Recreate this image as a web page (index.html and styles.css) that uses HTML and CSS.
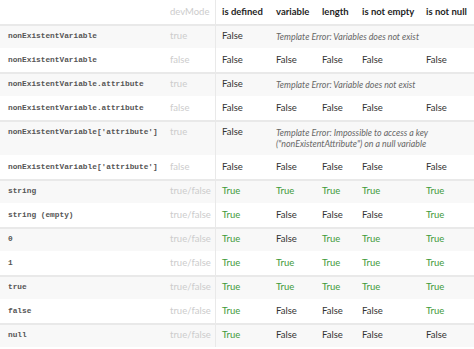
FILE: index.html
```html
<!DOCTYPE html>
<html>
<head>
<meta charset="utf-8">
<link rel="stylesheet" href="styles.css">
</head>
<body>
<div class="table">
  <div class="row head">
    <div class="c label"></div>
    <div class="c mode">devMode</div>
    <div class="c def">is defined</div>
    <div class="c">variable</div>
    <div class="c">length</div>
    <div class="c">is not empty</div>
    <div class="c">is not null</div>
  </div>

  <div class="row odd first">
    <div class="c label">nonExistentVariable</div>
    <div class="c mode">true</div>
    <div class="c def">False</div>
    <div class="c err">Template Error: Variables does not exist</div>
  </div>
  <div class="row">
    <div class="c label">nonExistentVariable</div>
    <div class="c mode">false</div>
    <div class="c def">False</div>
    <div class="c">False</div>
    <div class="c">False</div>
    <div class="c">False</div>
    <div class="c">False</div>
  </div>

  <div class="row odd first">
    <div class="c label">nonExistentVariable.attribute</div>
    <div class="c mode">true</div>
    <div class="c def">False</div>
    <div class="c err">Template Error: Variable does not exist</div>
  </div>
  <div class="row">
    <div class="c label">nonExistentVariable.attribute</div>
    <div class="c mode">false</div>
    <div class="c def">False</div>
    <div class="c">False</div>
    <div class="c">False</div>
    <div class="c">False</div>
    <div class="c">False</div>
  </div>

  <div class="row odd first">
    <div class="c label">nonExistentVariable['attribute']</div>
    <div class="c mode">true</div>
    <div class="c def">False</div>
    <div class="c err">Template Error: Impossible to access a key ("nonExistentAttribute") on a null variable</div>
  </div>
  <div class="row">
    <div class="c label">nonExistentVariable['attribute']</div>
    <div class="c mode">false</div>
    <div class="c def">False</div>
    <div class="c">False</div>
    <div class="c">False</div>
    <div class="c">False</div>
    <div class="c">False</div>
  </div>

  <div class="row odd first">
    <div class="c label">string</div>
    <div class="c mode">true/false</div>
    <div class="c def t">True</div>
    <div class="c t">True</div>
    <div class="c t">True</div>
    <div class="c t">True</div>
    <div class="c t">True</div>
  </div>
  <div class="row">
    <div class="c label">string (empty)</div>
    <div class="c mode">true/false</div>
    <div class="c def t">True</div>
    <div class="c">False</div>
    <div class="c">False</div>
    <div class="c">False</div>
    <div class="c t">True</div>
  </div>

  <div class="row odd first">
    <div class="c label">0</div>
    <div class="c mode">true/false</div>
    <div class="c def t">True</div>
    <div class="c">False</div>
    <div class="c t">True</div>
    <div class="c t">True</div>
    <div class="c t">True</div>
  </div>
  <div class="row">
    <div class="c label">1</div>
    <div class="c mode">true/false</div>
    <div class="c def t">True</div>
    <div class="c t">True</div>
    <div class="c t">True</div>
    <div class="c t">True</div>
    <div class="c t">True</div>
  </div>

  <div class="row odd first">
    <div class="c label">true</div>
    <div class="c mode">true/false</div>
    <div class="c def t">True</div>
    <div class="c t">True</div>
    <div class="c t">True</div>
    <div class="c t">True</div>
    <div class="c t">True</div>
  </div>
  <div class="row">
    <div class="c label">false</div>
    <div class="c mode">true/false</div>
    <div class="c def t">True</div>
    <div class="c">False</div>
    <div class="c">False</div>
    <div class="c">False</div>
    <div class="c t">True</div>
  </div>

  <div class="row odd first">
    <div class="c label">null</div>
    <div class="c mode">true/false</div>
    <div class="c def t">True</div>
    <div class="c">False</div>
    <div class="c">False</div>
    <div class="c">False</div>
    <div class="c">False</div>
  </div>
</div>
</body>
</html>
```

FILE: styles.css
```css
html, body {
  margin: 0;
  padding: 0;
  background: #ffffff;
}
body {
  font-family: Lato, "Liberation Sans", sans-serif;
  font-size: 9.5px;
  color: #333333;
  width: 474px;
  height: 349px;
  overflow: hidden;
}
.table {
  display: flex;
  flex-direction: column;
}
.row {
  display: grid;
  grid-template-columns: 170px 45px 55px 46px 40px 64px 54px;
  background: #ffffff;
}
.row.odd {
  background: #f8f8f8;
}
.row.first {
  box-shadow: inset 0 2px 0 #e9e9e9;
}
.c {
  padding: 6px 0 6px 6px;
  line-height: 12px;
  white-space: nowrap;
}
.c.label {
  padding-left: 8px;
  font-family: "Liberation Mono", "DejaVu Sans Mono", monospace;
  font-size: 7.8px;
  font-weight: 700;
  color: #555555;
}
.c.mode {
  padding-left: 0;
  color: #cccccc;
}
.c.def {
  border-left: 1px solid #e9e9e9;
  padding-left: 6px;
}
.c.t {
  color: #3f9a3a;
}
.c.err {
  grid-column: 4 / 8;
  white-space: normal;
  font-style: italic;
  font-size: 8.8px;
  line-height: 11px;
  padding-top: 7px;
  color: #666666;
  padding-right: 8px;
}
.head .c {
  font-weight: 700;
  color: #1f1f1f;
}
.head .c.mode {
  font-weight: 400;
  color: #cccccc;
}
```
